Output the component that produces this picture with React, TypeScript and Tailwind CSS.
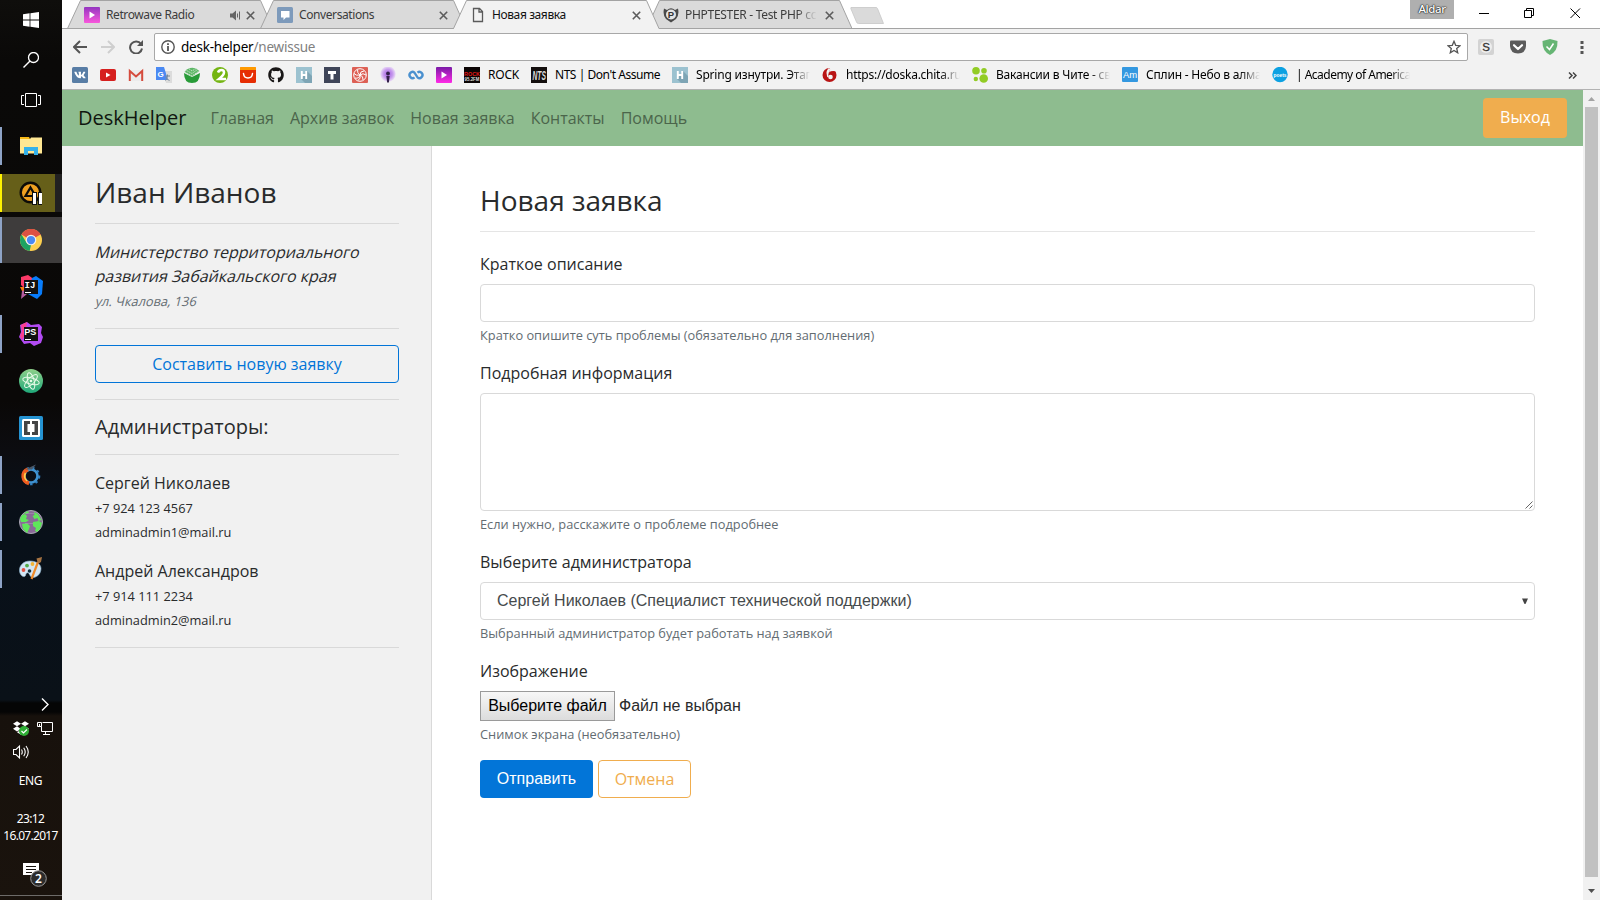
import type { ReactNode } from "react";
import { FaVk, FaGithub, FaDropbox } from "react-icons/fa";

const ui = "font-['Noto_Sans','Open_Sans',sans-serif]";

/* ---------- taskbar ---------- */

function Svg({ s = 24, box, children, className = "" }: { s?: number; box?: string; children: ReactNode; className?: string }) {
  return (
    <svg width={s} height={s} viewBox={box ?? `0 0 ${s} ${s}`} className={`block shrink-0 ${className}`} fill="none">
      {children}
    </svg>
  );
}

function TaskItem({ running, active, children }: { running?: boolean; active?: boolean; children: ReactNode }) {
  return (
    <div className="flex h-[47px] w-full items-center">
      <div className={`flex w-full items-center ${active ? "h-[46px] bg-[#3e3c3c]" : "h-[38px]"}`}>
        <div className={`w-[2px] self-stretch ${running ? "bg-[#8ea3c6]" : ""}`} />
        <div className="flex flex-1 justify-center pr-[2px]">{children}</div>
      </div>
    </div>
  );
}

function Taskbar() {
  return (
    <aside className={`flex h-full w-[62px] shrink-0 flex-col bg-[linear-gradient(180deg,#0f0e0c_0,#0a0908_60px,#0a0807_400px,#0c0c10_450px,#0a1018_490px,#081019_540px,#0a1118_700px,#050505_703px,#050505_712px,#17110c_716px,#1a130d_900px)] text-white ${ui}`}>
      <div className="flex h-[40px] items-center justify-center">
        <Svg s={16}>
          <path fill="#fff" d="M0 2.2 6.6 1.3V7.6H0zM7.4 1.2 16 0V7.6H7.4zM0 8.4H6.6V14.7L0 13.8zM7.4 8.4H16V16L7.4 14.8z" />
        </Svg>
      </div>
      <div className="flex h-[40px] items-center justify-center">
        <Svg s={16}>
          <circle cx="10.5" cy="5.5" r="5" stroke="#fff" strokeWidth="1.3" />
          <path d="M7 9 .5 15.5" stroke="#fff" strokeWidth="1.4" />
        </Svg>
      </div>
      <div className="flex h-[42px] items-center justify-center pb-[2px]">
        <svg width="20" height="14" viewBox="0 0 20 14" fill="none" stroke="#fff">
          <path d="M4.5.5h11v13h-11zM3 2.5H.5v9H3M17 2.5h2.5v9H17" />
        </svg>
      </div>

      <TaskItem running>
        <Svg s={24}>
          <path fill="#f7b917" d="M1 3h9l1 2h-10z" />
          <path fill="#ffe793" d="M1 5h10l1-1.500h11v16H1z" />
          <path fill="#35b1ea" d="M5 13h14v8h-4v-4H9v4H5z" />
        </Svg>
      </TaskItem>
      <div className="flex h-[47px] items-center">
        <div className="flex h-[38px] w-full bg-[#222121]">
          <div className="w-[2px] bg-[#fff200]" />
          <div className="flex w-[53px] items-center justify-center bg-[#665f19] pl-[3px]">
            <Svg s={24}>
              <circle cx="12.500" cy="11.500" r="9.800" fill="#efa020" stroke="#0d0c08" strokeWidth="2.400" />
              <path d="M12.500 6.500 17.500 15H7.500z" stroke="#0d0c08" strokeWidth="2.200" />
              <path d="M14 11h5v13h-5zM20 11h4v13h-4z" fill="#111" />
              <path d="M15 12h3v11h-3zM21 12h3v11h-3z" fill="#fff" />
            </Svg>
          </div>
        </div>
      </div>
      <TaskItem running active>
        <Svg s={22} box="0 0 24 24">
          <circle cx="12" cy="12" r="12" fill="#fdd04f" />
          <path fill="#dd5144" d="M12 12 1.600 6A12 12 0 0 1 22.400 6z" />
          <path fill="#1da362" d="M1.600 6 7 14.800 12 17.500 10.500 23.900A12 12 0 0 1 1.600 6z" />
          <path fill="#dd5144" d="M12 6.500H22.700A12 12 0 0 0 4 3.100L7 10z" />
          <circle cx="12" cy="12" r="5.800" fill="#f1f1f1" />
          <circle cx="12" cy="12" r="4.500" fill="#4a8af4" />
        </Svg>
      </TaskItem>
      <TaskItem>
        <Svg s={24}>
          <path fill="#fc3a68" d="M2 2 9 0l7 5-9 10-5-5z" />
          <path fill="#087cfa" d="M13 3 17 1l7 5-1 13-5 5-9-5z" />
          <path fill="#f97a12" d="M1 12h6v7l-4-3z" />
          <path fill="#b35a9d" d="M3 16 8 14v5l-6 5z" />
          <path fill="#111" d="M5 5h14v14H5z" />
          <path stroke="#fff" d="M6 17.500h6" />
          <text x="5.500" y="13" fill="#fff" fontSize="9" fontWeight="700" fontFamily="Liberation Mono">IJ</text>
        </Svg>
      </TaskItem>
      <TaskItem running>
        <Svg s={24}>
          <path fill="#b24bf3" d="M1 3 8 0l4 3 8-1 3 3-1 6 2 4-2 6-7 3-4-3-6 1-5-7 2-5z" />
          <path fill="#fb3f8f" d="M2 3 8 0 6 12l-3 6-2-4 2-5z" />
          <path fill="#111" d="M5 5h14v14H5z" />
          <path stroke="#fff" d="M6 17.500h6" />
          <text x="5.300" y="13" fill="#fff" fontSize="9" fontWeight="700" fontFamily="Liberation Sans">PS</text>
        </Svg>
      </TaskItem>
      <TaskItem>
        <Svg s={24}>
          <defs>
            <linearGradient id="atom" x1="0" y1="0" x2="0" y2="1">
              <stop stopColor="#8fd08a" /><stop offset="1" stopColor="#1fa879" />
            </linearGradient>
          </defs>
          <circle cx="12" cy="12" r="12" fill="url(#atom)" />
          <g stroke="#e9fbe9" strokeWidth="1">
            <ellipse cx="12" cy="12" rx="8.500" ry="3.200" transform="rotate(15 12 12)" />
            <ellipse cx="12" cy="12" rx="8.500" ry="3.200" transform="rotate(75 12 12)" />
            <ellipse cx="12" cy="12" rx="8.500" ry="3.200" transform="rotate(135 12 12)" />
          </g>
          <circle cx="12" cy="12" r="1.300" fill="#e9fbe9" />
        </Svg>
      </TaskItem>
      <TaskItem>
        <Svg s={24}>
          <rect width="24" height="24" rx="1.500" fill="#2593d2" />
          <rect x="3" y="3" width="18" height="18" rx="1.500" fill="#fff" />
          <path fill="#444" d="M5 5h6v3H8.500v8H11v3H5zM19 5h-6v3h2.500v8H13v3h6z" />
        </Svg>
      </TaskItem>
      <TaskItem running>
        <Svg s={24}>
          <circle cx="12" cy="13" r="8.300" stroke="#2f7fc0" strokeWidth="2" strokeDasharray="2.500 3.200" />
          <circle cx="12" cy="13" r="6.500" stroke="#3f92d0" strokeWidth="2.600" />
          <path d="M10 20.200A7.300 7.300 0 0 1 9 6.300" stroke="#ef5c1e" strokeWidth="4" />
          <path d="M8 18A6.500 6.500 0 0 1 6.500 10" stroke="#ffd24a" strokeWidth="1.600" />
          <path d="M6 6.500 17 1.500 13 6.500z" fill="#4a5868" />
        </Svg>
      </TaskItem>
      <TaskItem running>
        <Svg s={24}>
          <circle cx="12" cy="12" r="11.500" fill="#8a6a98" stroke="#a9a9b4" />
          <path fill="#5fe65a" d="M1 9 3 5l3-1 2 2-1 3 3 1-3 2-5 0zM5 3l4-2 1 2-3 1zM15 2l4 2 3.500 6-3 1-1-3-3 1-2-3 2-1zM3 14l5-1 3 3-1 3-2 4-4-4zM14 12l6-1 3 2-2 6-3 3-2-1 1-3-3-2z" />
          <path stroke="#b09abc" d="M7 3.500h8M6 13.500h8" opacity=".5" />
        </Svg>
      </TaskItem>
      <TaskItem running>
        <Svg s={24}>
          <path fill="#d3e6f4" stroke="#8db4cf" strokeWidth=".6" d="M11 4C4 4 0 9 .5 14c.3 3.500 3 6 5 5.500 2-.6.500-3.500 3-3.800 2.500 0 2 5.300 6 4.800 4-.5 7.500-4 7.500-9C22 7 17 4 11 4z" />
          <circle cx="4.500" cy="13" r="1.900" fill="#e25343" />
          <circle cx="8" cy="8.600" r="1.900" fill="#53ad4a" />
          <circle cx="13.500" cy="7" r="1.900" fill="#f2b437" />
          <circle cx="10.500" cy="14" r="1.800" fill="#12303f" />
          <path d="M19 5 12.500 22" stroke="#ee8a2a" strokeWidth="2.200" />
          <path d="M17.500 1.500 23 0l-1 5-3 2z" fill="#a77443" />
        </Svg>
      </TaskItem>

      <div className="mt-auto flex h-[18px] justify-end pr-[13px]">
        <Svg s={8} box="0 0 8 13" className="h-[13px]!">
          <path d="M1 .5 7 6.500 1 12.500" stroke="#fff" strokeWidth="1.400" />
        </Svg>
      </div>
      <div className="flex h-[24px] items-center gap-[8px] pl-[13px]">
        <div className="relative">
          <FaDropbox size={16} />
          <span className="absolute top-[6px] left-[6px]">
            <Svg s={10}>
              <circle cx="5" cy="5" r="5" fill="#2fae35" />
              <path d="M2.500 5 4.500 7 8 3.500" stroke="#fff" strokeWidth="1.200" />
            </Svg>
          </span>
        </div>
        <Svg s={16}>
          <path d="M5.500 2.500h10v9h-11v-5M8.500 12v3M6 14.500h7M.5 2.500h4v4h-4zM2.500 4v3" stroke="#fff" />
        </Svg>
      </div>
      <div className="flex h-[24px] items-center pl-[13px]">
        <Svg s={17}>
          <path d="M.5 5.500h2.500l3.500-3.500v12l-3.500-3.500H.5zM8.500 5.500q1.500 2.500 0 5M10.700 3.700q3 4.300 0 8.600M13 2q4.500 6 0 12" stroke="#fff" strokeWidth="1.100" />
        </Svg>
      </div>
      <div className="flex h-[32px] items-center justify-center pt-px pr-px text-[12px] tracking-[-0.3px]">ENG</div>
      <div className="mt-[14px] flex flex-col items-center pr-px text-center text-[12px] leading-[17px] whitespace-nowrap">
        <div className="tracking-[-0.6px]">23:12</div>
        <div className="tracking-[-0.7px]">16.07.2017</div>
      </div>
      <div className="mt-[19px] flex h-[32px] pl-[23px]">
        <Svg s={24}>
          <path fill="#fff" d="M0 0h16v12h-4v3l-4-3H0z" />
          <path stroke="#17110c" strokeWidth="1.200" d="M3 3.500h10M3 6.500h10M3 9.500h6" />
          <circle cx="15.500" cy="15.500" r="7.800" fill="#2c2c2c" stroke="#999" />
          <text x="15.500" y="20" fill="#fff" fontSize="12" fontWeight="600" textAnchor="middle" fontFamily="Noto Sans">2</text>
        </Svg>
      </div>
      <div className="mb-[4px] h-px bg-[#6d6b69]" />
    </aside>
  );
}

/* ---------- browser chrome ---------- */

function Tab({ active, title, icon, sound, faded, first }: { active?: boolean; title: string; icon: ReactNode; sound?: boolean; faded?: boolean; first?: boolean }) {
  return (
    <div className={`relative flex h-[29px] w-[206px] shrink-0 items-center pt-px pr-[17px] pl-[17px] ${first ? "" : "-ml-[13px]"} ${active ? "z-10" : ""}`}>
      <svg className="absolute inset-0" width="206" height="29" viewBox="0 0 206 29">
        <path d="M.5 28.500 13.500.5H193.500L206 28.500" fill={active ? "#f2f2f2" : "#dadada"} stroke="#a3a3a3" />
        {!active && <path d="M0 28.500H206" stroke="#a3a3a3" />}
        {active && <path d="M1 28.500H205.500" stroke="#f2f2f2" />}
      </svg>
      <div className="relative flex w-[16px] justify-center">{icon}</div>
      <div className={`relative ml-[6px] flex-1 overflow-hidden text-[12px] whitespace-nowrap ${active ? "text-[#111]" : "text-[#3c3c3c]"} ${faded ? "tracking-[-0.3px] [mask-image:linear-gradient(90deg,#000_112px,transparent_132px)]" : "tracking-[-0.4px]"}`}>{title}</div>
      {sound && (
        <Svg s={11} className="relative mr-[5px]">
          <path fill="#666" d="M0 3.500h2.500L6 .5v10l-3.500-3H0z" />
          <path d="M7.500 3.500v4M9.500 1.500v8" stroke="#666" />
        </Svg>
      )}
      <Svg s={9} className="relative mr-px">
        <path d="M.8.8 8.200 8.200M8.200.8.8 8.200" stroke="#5c5c5c" strokeWidth="1.600" />
      </Svg>
    </div>
  );
}

function RetroIcon({ id, a, b }: { id: string; a: string; b: string }) {
  return (
    <Svg s={16}>
      <defs>
        <linearGradient id={id} x1="0" y1="0" x2="0" y2="1"><stop stopColor={a} /><stop offset="1" stopColor={b} /></linearGradient>
      </defs>
      <rect width="16" height="16" rx="1" fill={`url(#${id})`} />
      <path d="M5.500 4.500v7L11 8z" fill="#fff" />
    </Svg>
  );
}

function TabStrip() {
  return (
    <div className={`flex h-[29px] bg-white pl-[5px] shadow-[inset_0_-1px_0_#a3a3a3] ${ui}`}>
      <Tab first title="Retrowave Radio" sound icon={<RetroIcon id="r1" a="#9436c0" b="#f957dc" />} />
      <Tab title="Conversations" icon={
        <Svg s={16}><rect width="16" height="16" rx="1.500" fill="#7d9abb" /><path fill="#fff" d="M4 4h8.500v6.500H9L6.500 13v-2.500H4z" /></Svg>
      } />
      <Tab active title="Новая заявка" icon={
        <Svg s={16}><path d="M3.500 1.500h6l3 3v10h-9zM9 1.500V5h3.500" stroke="#5a5a5a" strokeWidth="1.300" /></Svg>
      } />
      <Tab faded title="PHPTESTER - Test PHP cc" icon={
        <Svg s={16}>
          <path d="M1 1.500 4 3Q8-.5 12 3l3-1.500Q16.500 8 13 12L8 15.500 3 12Q-.5 8 1 1.500z" fill="#4a4a4a" />
          <circle cx="8" cy="7.500" r="5" fill="#e4e4e4" />
          <text x="8" y="11" fontSize="9.500" fontWeight="700" textAnchor="middle" fill="#333" fontFamily="Liberation Sans">P</text>
        </Svg>
      } />
      <svg className="-ml-[4px]" width="38" height="29" viewBox="0 0 38 29">
        <path d="M3 7.500H28Q29 7.500 29.500 8.500L35.500 23.500H10.500Q9 23.500 8.500 22L3 9Q2.500 7.500 3 7.500z" fill="#dadada" stroke="#c6c6c6" strokeWidth=".8" />
      </svg>
      <div className="ml-auto flex">
        <div className="mr-[25px] h-[19px] w-[44px] bg-[#afafaf] text-center text-[11.500px] leading-[18px] font-medium tracking-[-0.4px] text-white [text-shadow:0_0_2px_#222,0_0_1px_#222,0_0_1px_#222]">Aldar</div>
        <svg className="mr-[19px]" width="102" height="28" viewBox="0 0 102 28" fill="none" stroke="#000" strokeWidth="1">
          <path d="M0 13.500h10M45.500 10.500h7v7h-7zM47.500 10v-1.500h7v7h-2M91.500 8.500l9.500 9.500M101 8.500l-9.500 9.500" />
        </svg>
      </div>
    </div>
  );
}

function AddressBar() {
  return (
    <div className={`flex h-[32px] items-end bg-[#f2f2f2] ${ui}`}>
      <div className="flex h-[28px] w-[92px] items-center gap-[14px] pl-[11px]">
        <Svg s={14}><path d="M14 7H1.500M7 1 1 7l6 6" stroke="#555" strokeWidth="2" /></Svg>
        <Svg s={14}><path d="M0 7H12.500M7 1l6 6-6 6" stroke="#cfcfcf" strokeWidth="2" /></Svg>
        <Svg s={14}><path d="M12 4A6 6 0 1 0 13 8.500" stroke="#555" strokeWidth="2" /><path d="M14 0v6H8z" fill="#555" /></Svg>
      </div>
      <div className="flex h-[28px] w-[1314px] items-center rounded-[2px] border border-[#a8a8a8] bg-white px-[6px] text-[13.500px]">
        <Svg s={14}>
          <circle cx="7" cy="7" r="6.200" stroke="#555" strokeWidth="1.400" />
          <path d="M7 6v5M7 3.200v1.800" stroke="#555" strokeWidth="1.800" />
        </Svg>
        <span className="ml-[6px] tracking-[-0.22px] text-black">desk-helper<span className="text-[#808080]">/newissue</span></span>
        <Svg s={14} className="ml-auto">
          <path d="M7 1.300 8.700 5.300 13 5.700 9.700 8.500 10.700 12.800 7 10.500 3.300 12.800 4.300 8.500 1 5.700 5.300 5.300z" stroke="#555" strokeWidth="1.300" />
        </Svg>
      </div>
      <div className="flex h-[28px] items-center gap-[16px] pl-[10px]">
        <Svg s={16}>
          <rect width="16" height="16" rx="2" fill="#d3d3d3" /><circle cx="8" cy="8" r="6" fill="#eee" />
          <text x="8" y="12" fontSize="11.500" textAnchor="middle" fill="#333" stroke="#333" strokeWidth=".3" fontFamily="Liberation Sans">S</text>
        </Svg>
        <Svg s={16}>
          <path d="M0 2.500Q0 1.500 1 1.500H15Q16 1.500 16 2.500V7Q15.500 14.500 8 14.500T0 7z" fill="#5b5b5b" />
          <path d="M4 6.200 8 10l4-3.800" stroke="#fff" strokeWidth="2.200" strokeLinecap="round" strokeLinejoin="round" />
        </Svg>
        <Svg s={16}>
          <path d="M8 0 15.500 2Q16 12 8 16 0 12 .5 2z" fill="#66b574" />
          <path d="M4.500 7.500 7.500 10.500 11.500 4.500" stroke="#fff" strokeWidth="1.500" />
        </Svg>
        <Svg s={16}><path fill="#555" d="M6.500 2h3v3h-3zM6.500 7h3v3h-3zM6.500 12h3v3h-3z" /></Svg>
      </div>
    </div>
  );
}

function Bookmark({ icon, label, width, clip, tracking = "tracking-[-0.2px]" }: { icon: ReactNode; label: string; width: string; clip?: boolean; tracking?: string }) {
  return (
    <div className={`flex shrink-0 items-center ${width}`}>
      {icon}
      <span className={`ml-[8px] text-[12px] whitespace-nowrap text-black ${tracking} ${clip ? "w-[114px] overflow-hidden [mask-image:linear-gradient(90deg,#000_94px,transparent_114px)]" : ""}`}>{label}</span>
    </div>
  );
}

function HabrIcon() {
  return (
    <Svg s={16}>
      <rect width="16" height="16" fill="#9cc2d0" />
      <path d="M11 4 16 9v7H9l-4-4z" fill="#7ea5b5" />
      <path d="M5.800 4v8M10.200 4v8M6 8h4" stroke="#fff" strokeWidth="1.900" />
    </Svg>
  );
}

function BookmarksBar() {
  return (
    <div className={`flex h-[29px] items-center border-b border-[#b3b3b3] bg-[#f2f2f2] pb-px pl-[10px] ${ui}`}>
      <div className="flex w-[392px] shrink-0 gap-[12px]">
        <div className="flex h-[16px] w-[16px] items-center justify-center rounded-[1.500px] bg-[#587da5] text-white"><FaVk size={12} /></div>
        <Svg s={16}><rect y="2" width="16" height="12" rx="2" fill="#d6201f" /><path d="M6 5.500v5L10.500 8z" fill="#fff" /></Svg>
        <Svg s={16}><path d="M1 3h14v11H1z" fill="#ececec" /><path d="M1.800 14V4L8 9.500 14.200 4v10" stroke="#d54b3d" strokeWidth="2" /></Svg>
        <Svg s={16}>
          <path d="M6 4h10v12H10z" fill="#dcdcdc" /><path d="M0 0h8l4 13H0z" fill="#4a89f3" />
          <path d="M9 9h5M11.500 7.500V9q-.5 3-2 4.500M10 10.500q1 2 3.500 3" stroke="#7a8a98" />
          <text x="4.500" y="9.500" fontSize="8" fontWeight="700" textAnchor="middle" fill="#fff" fontFamily="Liberation Sans">G</text>
        </Svg>
        <Svg s={16}>
          <path d="M0 6Q0 16 8 16T16 6L8 10z" fill="#289b38" />
          <path d="M.5 5 8 9.500 15.500 4Q11-.5 6 1 2 2 .5 5z" fill="#5fb768" />
          <path d="M1 5 8 9l7-5M2.500 3.500 8 6.500l5.500-4M5 1.800 8 4l4-2.500" stroke="#c9e8cb" strokeWidth=".9" strokeDasharray="1.500 .8" />
        </Svg>
        <Svg s={16}>
          <circle cx="8" cy="8" r="8" fill="#74b512" />
          <path d="M6 5.500Q7 3 9.500 3t2.500 2.500Q12 8 7 12h7" stroke="#fff" strokeWidth="2.500" />
        </Svg>
        <Svg s={16}>
          <rect width="16" height="16" rx="1.500" fill="#e62e04" /><path d="M0 3V1Q0 0 1 0H15Q16 0 16 1V3z" fill="#ff9900" />
          <path d="M3.500 6.500q.5 4.500 4.500 4.500t4.500-4.500" stroke="#fff" strokeWidth="1.500" strokeLinecap="round" />
        </Svg>
        <FaGithub size={16} className="shrink-0 text-[#191717]" />
        <HabrIcon />
        <Svg s={16}><rect width="16" height="16" fill="#3f4558" /><path d="M4 4h8v3h-2.500v5.500h-3V7H4z" fill="#fff" /></Svg>
        <Svg s={16}>
          <rect width="16" height="16" rx="1" fill="#dd6055" />
          <g stroke="#fff" strokeWidth="1">
            <circle cx="8" cy="8" r="6.300" />
            <path d="M8 8q0-4 4-4M8 8q3-2.500 6 0M8 8q3.500 1 3 5M8 8q1 3.500-2 5.500M8 8q-1 4-5 3M8 8Q4 9 2 6.500M8 8Q5 6 5.500 2.500" />
          </g>
        </Svg>
        <Svg s={16}>
          <defs>
            <radialGradient id="pod"><stop stopColor="#a45fe0" /><stop offset=".6" stopColor="#c79bee" /><stop offset="1" stopColor="#ece0f6" /></radialGradient>
          </defs>
          <circle cx="8" cy="7" r="7.800" fill="url(#pod)" />
          <circle cx="8" cy="6.500" r="1.900" fill="#33204a" /><path d="M6.300 9h3.400l-.8 6.500H7.100z" fill="#33204a" />
        </Svg>
        <Svg s={16}>
          <path d="M6.500 10.300A3 3 0 1 1 6.500 5.700L9.500 10.300A3 3 0 1 0 9.500 5.700" stroke="#4a90cf" strokeWidth="2.400" />
        </Svg>
        <RetroIcon id="r2" a="#7a1aa6" b="#ff2ae6" />
      </div>
      <Bookmark width="w-[67px]" label="ROCK" icon={
        <Svg s={16}><rect width="16" height="16" fill="#0b0505" />
          <text x="0" y="8.500" fontSize="5.500" fontWeight="700" textLength="16" lengthAdjust="spacingAndGlyphs" fill="#e01818" fontFamily="Liberation Sans">ROCK</text>
          <text x="0.500" y="13.500" fontSize="4.500" fontWeight="700" textLength="15" lengthAdjust="spacingAndGlyphs" fill="#ddd" fontFamily="Liberation Sans">95.2FM</text></Svg>
      } />
      <Bookmark width="w-[141px]" label="NTS | Don't Assume" tracking="tracking-[-0.46px]" icon={
        <Svg s={16}><rect width="16" height="16" fill="#140f0e" /><text transform="translate(1.500 12.500) scale(.56 1)" fontSize="12" fontWeight="700" fontStyle="italic" fill="#ddd" fontFamily="Liberation Sans">NTS</text></Svg>
      } />
      <Bookmark clip width="w-[150px]" label="Spring изнутри. Этап" icon={<HabrIcon />} />
      <Bookmark clip width="w-[150px]" label="https://doska.chita.ru/" tracking="tracking-[-0.25px]" icon={
        <Svg s={16}><circle cx="7.500" cy="8" r="7" fill="#b91414" /><path d="M8 0Q3 4 5 8M7 5.500Q10 3 16 5V0H9z" fill="#f2f2f2" /><circle cx="8.500" cy="10" r="2.300" fill="#f2f2f2" /><path d="M6 10Q4.500 5 9 1" stroke="#f2f2f2" strokeWidth="1.500" /></Svg>
      } />
      <Bookmark clip width="w-[150px]" label="Вакансии в Чите - св" icon={
        <Svg s={16}><g fill="#92cc25"><circle cx="4" cy="3.800" r="3.800" /><circle cx="12" cy="3.800" r="2.800" /><circle cx="3.800" cy="12" r="2.200" /><circle cx="11.700" cy="11.500" r="4.300" /></g></Svg>
      } />
      <Bookmark clip width="w-[150px]" label="Сплин - Небо в алма" icon={
        <Svg s={16}><rect width="16" height="15" rx="1" fill="#3498e0" /><text x="8" y="11" fontSize="9.500" textAnchor="middle" fill="#fff" fontFamily="Liberation Sans">Am</text></Svg>
      } />
      <Bookmark clip width="w-[150px]" label="| Academy of America" tracking="tracking-[-0.52px]" icon={
        <Svg s={16}><circle cx="8" cy="7.500" r="7.700" fill="#0ba1e2" /><text x="1.500" y="9.500" fontSize="5.500" fontWeight="700" textLength="13" lengthAdjust="spacingAndGlyphs" fill="#fff" fontFamily="Liberation Sans">poets</text></Svg>
      } />
      <Svg s={9} className="mt-px mr-[23px] ml-auto"><path d="M1 1.500 4 4.500 1 7.500M5 1.500l3 3-3 3" stroke="#444" strokeWidth="1.500" /></Svg>
    </div>
  );
}

/* ---------- page ---------- */

function Navbar() {
  return (
    <nav className="flex h-[56px] items-center bg-[#8ebc8f] pr-[16px] pl-[16px]">
      <a className="w-[132.500px] pb-px text-[20px] text-[#10160f]">DeskHelper</a>
      <div className="flex gap-[16px] text-[16px] text-[#4b654b]">
        <a>Главная</a>
        <a>Архив заявок</a>
        <a>Новая заявка</a>
        <a>Контакты</a>
        <a>Помощь</a>
      </div>
      <button className="ml-auto h-[40px] w-[84px] rounded-[4px] bg-[#f0ad4e] pb-[3px] text-[16px] text-white">Выход</button>
    </nav>
  );
}

function Rule({ tone = "border-[#d9d9d9]" }: { tone?: string }) {
  return <hr className={`my-4 w-full border-t ${tone}`} />;
}

const admins = [
  { name: "Сергей Николаев", phone: "+7 924 123 4567", mail: "adminadmin1@mail.ru" },
  { name: "Андрей Александров", phone: "+7 914 111 2234", mail: "adminadmin2@mail.ru" },
];

function Sidebar() {
  return (
    <section className="flex w-[370px] shrink-0 flex-col border-r border-[#d9d9d9] bg-[#f1f1f1] pt-[30px] pr-[32px] pl-[33px]">
      <h3 className="h-[31px] pt-px text-[28px] leading-[31px]">Иван Иванов</h3>
      <Rule />
      <div className="flex h-[72px] flex-col items-start pl-px leading-[24px] whitespace-nowrap">
        <span className="-skew-x-[14deg]">Министерство территориального</span>
        <span className="-skew-x-[14deg]">развития Забайкальского края</span>
        <small className="-skew-x-[14deg] pt-px text-[12.800px] text-[#636c72]">ул. Чкалова, 136</small>
      </div>
      <Rule />
      <button className="h-[38px] shrink-0 rounded-[4px] border border-[#0275d8] text-[16px] text-[#0275d8]">Составить новую заявку</button>
      <Rule />
      <h5 className="h-[22px] text-[20px] leading-[22px]">Администраторы:</h5>
      <Rule />
      <div className="flex flex-col gap-4">
        {admins.map((a) => (
          <div key={a.mail} className="h-[72px] leading-[24px]">
            <div>{a.name}</div>
            <div className="pt-px text-[12.800px]">{a.phone}</div>
            <div className="text-[12.800px]">{a.mail}</div>
          </div>
        ))}
      </div>
      <Rule />
    </section>
  );
}

function Field({ label, hint, children }: { label: string; hint: string; children: ReactNode }) {
  return (
    <div className="mb-4">
      <label className="mb-2 block h-[24px] leading-[24px]">{label}</label>
      {children}
      <small className="mt-1 block h-[19px] text-[12.800px] leading-[19px] text-[#636c72]">{hint}</small>
    </div>
  );
}

function IssueForm() {
  const arial = "font-['Liberation_Sans',Arial,sans-serif] font-normal";
  return (
    <section className="flex-1 pt-[38px] pr-[48px] pl-[48px]">
      <h3 className="h-[31px] pt-px text-[28px] leading-[31px]">Новая заявка</h3>
      <Rule tone="border-[#e5e5e5] mb-[20px]!" />
      <Field label="Краткое описание" hint="Кратко опишите суть проблемы (обязательно для заполнения)">
        <div className="h-[38px] rounded-[4px] border border-[#d9d9d9] bg-white" />
      </Field>
      <Field label="Подробная информация" hint="Если нужно, расскажите о проблеме подробнее">
        <div className="flex h-[118px] items-end justify-end rounded-[4px] border border-[#d9d9d9] bg-white p-px">
          <Svg s={8}><path d="M.5 7.500l7-7M4.500 7.500l3-3" stroke="#555" strokeWidth=".9" /></Svg>
        </div>
      </Field>
      <Field label="Выберите администратора" hint="Выбранный администратор будет работать над заявкой">
        <div className={`flex h-[38px] items-center justify-between rounded-[4px] border border-[#d9d9d9] bg-white pr-[6px] pl-[16px] text-[16px] text-[#464a4c] ${arial}`}>
          <span>Сергей Николаев (Специалист технической поддержки)</span>
          <Svg s={6}><path d="M0 .5h6L3.500 6h-1z" fill="#444" /></Svg>
        </div>
      </Field>
      <Field label="Изображение" hint="Снимок экрана (необязательно)">
        <div className={`flex h-[30px] items-center gap-[4px] text-[16px] ${arial}`}>
          <span className="flex h-[30px] w-[135px] items-center justify-center border border-[#9a9a9a] bg-[linear-gradient(#f7f7f7,#dcdcdc)] text-black">Выберите файл</span>
          <span className="text-[#292b2c]">Файл не выбран</span>
        </div>
      </Field>
      <div className="flex gap-[5px]">
        <button className={`h-[38px] w-[113px] rounded-[4px] bg-[#0275d8] pb-px text-[16px] text-white ${arial}`}>Отправить</button>
        <button className="h-[38px] w-[93px] rounded-[4px] border border-[#f0ad4e] text-[16px] text-[#f0ad4e]">Отмена</button>
      </div>
    </section>
  );
}

function Scrollbar() {
  return (
    <div className="flex w-[17px] shrink-0 flex-col items-center bg-[#f1f1f1]">
      <div className="flex h-[17px] items-center"><Svg s={7} box="0 0 7 4" className="h-[4px]!"><path d="M3.500 0 7 4H0z" fill="#a3a3a3" /></Svg></div>
      <div className="w-[13px] flex-1 bg-[#c1c1c1]" />
      <div className="flex h-[23px] items-center pt-[4px]"><Svg s={7} box="0 0 7 4" className="h-[4px]!"><path d="M0 0h7L3.500 4z" fill="#505050" /></Svg></div>
    </div>
  );
}

export default function App() {
  return (
    <div className="flex h-[900px] w-[1600px] overflow-hidden bg-white">
      <Taskbar />
      <div className="flex min-w-0 flex-1 flex-col">
        <TabStrip />
        <AddressBar />
        <BookmarksBar />
        <div className="flex min-h-0 flex-1">
          <div className="flex min-w-0 flex-1 flex-col font-['Open_Sans','Noto_Sans',sans-serif] text-[16px] font-normal text-[#292b2c]">
            <Navbar />
            <div className="flex min-h-0 flex-1">
              <Sidebar />
              <IssueForm />
            </div>
          </div>
          <Scrollbar />
        </div>
      </div>
    </div>
  );
}
